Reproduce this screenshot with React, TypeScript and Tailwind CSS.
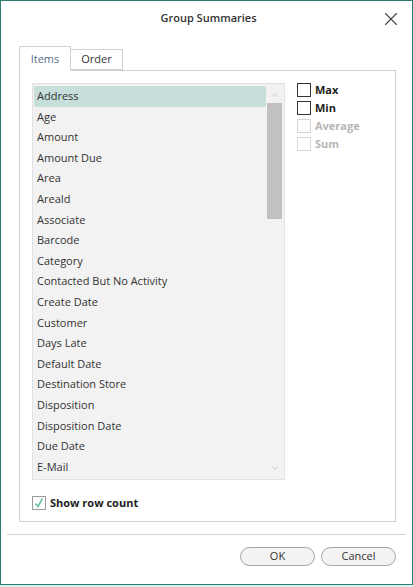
import { ChevronDown, ChevronUp, X } from "lucide-react";

const fields = [
  "Address",
  "Age",
  "Amount",
  "Amount Due",
  "Area",
  "AreaId",
  "Associate",
  "Barcode",
  "Category",
  "Contacted But No Activity",
  "Create Date",
  "Customer",
  "Days Late",
  "Default Date",
  "Destination Store",
  "Disposition",
  "Disposition Date",
  "Due Date",
  "E-Mail",
];

// Opciones de resumen del lado derecho
const summaries = [
  { label: "Max", enabled: true },
  { label: "Min", enabled: true },
  { label: "Average", enabled: false },
  { label: "Sum", enabled: false },
];

function CheckBox({ enabled, checked }: { enabled: boolean; checked?: boolean }) {
  return (
    <span
      className={`w-[14px] h-[14px] border flex items-center justify-center bg-white ${
        checked ? "border-[#9a9a9a]" : enabled ? "border-[#333333]" : "border-[#d6d6d6]"
      }`}
    >
      {checked && (
        <svg width="12" height="12" viewBox="0 0 12 12">
          <path d="M2.5 6.5 L5 9.5 L9.5 1.5" fill="none" stroke="#6cc0aa" strokeWidth="1.6" />
        </svg>
      )}
    </span>
  );
}

export default function App() {
  return (
    <div className="w-[413px] h-[587px] bg-[#d8f3ef] font-['Open_Sans',sans-serif] text-[#333333]">
      <div className="w-[413px] h-[585px] bg-white border border-[#2f7b70] flex flex-col">
        {/* Barra de titulo */}
        <div className="h-[35px] flex items-center justify-between pl-[16px] pr-[10px]">
          <span className="w-[20px]" />
          <span className="text-[11px] font-semibold text-[#333333]">Group Summaries</span>
          <X size={22} strokeWidth={1.2} className="text-[#444444]" />
        </div>

        {/* Pestañas */}
        <div className="mt-[9px] ml-[18px] flex items-end h-[25px]">
          <div className="h-[25px] w-[52px] border border-b-0 border-[#d0d0d0] bg-white flex items-center justify-center text-[11px] text-[#5a6e88] relative z-10 -mb-px">
            Items
          </div>
          <div className="h-[21px] w-[52px] border border-l-0 border-[#d0d0d0] bg-white flex items-center justify-center text-[11px] text-[#333333]">
            Order
          </div>
        </div>

        {/* Panel principal */}
        <div className="ml-[18px] w-[377px] h-[452px] border border-[#d0d0d0] p-[12px] flex flex-col">
          <div className="flex gap-[12px]">
            <div className="w-[253px] h-[397px] border border-[#e2e2e2] bg-[#f2f2f2] flex">
              <div className="flex-1 pt-[2px] pl-[1px] overflow-hidden">
                {fields.map((field, index) => (
                  <div
                    key={field}
                    className={`h-[20.6px] flex items-center pl-[3px] text-[11px] rounded-[2px] ${
                      index === 0 ? "bg-[#c6dfdb]" : ""
                    }`}
                  >
                    {field}
                  </div>
                ))}
              </div>
              <div className="w-[17px] flex flex-col items-center pt-[2px] pb-[2px] mr-[1px]">
                <ChevronUp size={10} strokeWidth={1.5} className="text-[#a8a8a8] mt-[4px] mb-[2px]" />
                <div className="w-[15px] h-[116px] bg-[#c1c1c1] mt-[1px]" />
                <div className="flex-1" />
                <ChevronDown size={10} strokeWidth={1.5} className="text-[#a8a8a8] mb-[4px]" />
              </div>
            </div>
            <div className="flex flex-col gap-[4px]">
              {summaries.map((s) => (
                <div key={s.label} className="flex items-center gap-[4px] h-[14px]">
                  <CheckBox enabled={s.enabled} />
                  <span
                    className={`text-[11px] font-bold ${
                      s.enabled ? "text-[#222222]" : "text-[#b5b5b5]"
                    }`}
                  >
                    {s.label}
                  </span>
                </div>
              ))}
            </div>
          </div>
          <div className="mt-[15px] flex items-center gap-[4px]">
            <CheckBox enabled checked />
            <span className="text-[11px] font-bold text-[#222222]">Show row count</span>
          </div>
        </div>

        {/* Separador */}
        <div className="mt-[12px] mx-[6px] border-t border-[#d4d4d4]" />

        {/* Botones */}
        <div className="mt-[12px] flex justify-end gap-[6px] pr-[16px]">
          <button className="w-[75px] h-[19px] rounded-full border border-[#a5a5a5] bg-[#f3f3f3] text-[11px] text-[#333333] flex items-center justify-center">
            OK
          </button>
          <button className="w-[75px] h-[19px] rounded-full border border-[#a5a5a5] bg-[#f3f3f3] text-[11px] text-[#333333] flex items-center justify-center">
            Cancel
          </button>
        </div>
      </div>
    </div>
  );
}
